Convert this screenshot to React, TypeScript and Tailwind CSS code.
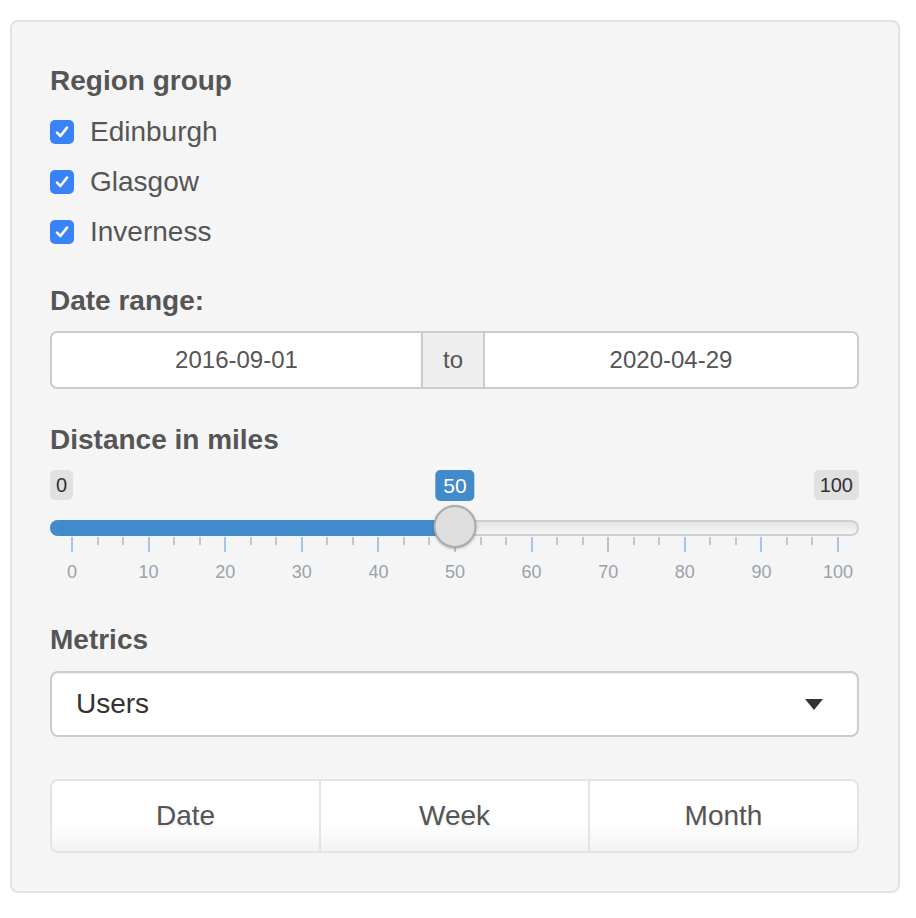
import React from 'react';

const regions = ['Edinburgh', 'Glasgow', 'Inverness'];
const TICK_LEFT = 22;
const TICK_SPAN = 766;
const ticks = Array.from({ length: 31 }, (_, i) => i);

function CheckRow({ label }: { label: string }) {
  return (
    <div className="flex h-[50px] items-center">
      <span className="flex h-[24px] w-[24px] items-center justify-center rounded-[5px] bg-[#3a82f7]">
        <svg width="16" height="16" viewBox="0 0 16 16" fill="none">
          <path d="M3 8.6 L6.4 12 L13 3.6" stroke="white" strokeWidth="2.6" strokeLinecap="round" strokeLinejoin="round" />
        </svg>
      </span>
      <span className="ml-[16px] text-[28px] leading-[40px] text-[#555]">{label}</span>
    </div>
  );
}

function DistanceSlider() {
  const value = 50;
  const handleX = TICK_LEFT + (TICK_SPAN * value) / 100;
  return (
    <div className="relative mt-[10px] h-[118px]">
      <span className="absolute left-0 top-0 h-[30px] rounded-[5px] bg-[#e1e1e1] px-[6px] text-[20px] leading-[30px] text-[#333]">0</span>
      <span className="absolute right-0 top-0 h-[30px] rounded-[5px] bg-[#e1e1e1] px-[6px] text-[20px] leading-[30px] text-[#333]">100</span>
      <span
        className="absolute top-0 h-[31px] -translate-x-1/2 rounded-[5px] bg-[#428bca] px-[8px] text-[21px] leading-[31px] text-white"
        style={{ left: handleX }}
      >
        50
      </span>
      <div className="absolute left-0 right-0 top-[50px] h-[16px] rounded-full border-2 border-[#d0d0d0] bg-gradient-to-b from-[#e4e4e4] to-[#f7f7f7]" />
      <div className="absolute left-0 top-[50px] h-[16px] rounded-l-full bg-[#428bca]" style={{ width: handleX }} />
      {ticks.map((i) => {
        const major = i % 3 === 0;
        return (
          <span
            key={i}
            className={major ? 'absolute top-[67px] h-[15px] w-[2px] bg-[#a8c6e3]' : 'absolute top-[67px] h-[8px] w-[2px] bg-[#c6c6c6]'}
            style={{ left: TICK_LEFT + (TICK_SPAN * i) / 30 - 1 }}
          />
        );
      })}
      {ticks.filter((i) => i % 3 === 0).map((i) => (
        <span
          key={i}
          className="absolute top-[92px] -translate-x-1/2 text-[18px] leading-[20px] text-[#9aa2ab]"
          style={{ left: TICK_LEFT + (TICK_SPAN * i) / 30 }}
        >
          {(i / 3) * 10}
        </span>
      ))}
      <div
        className="absolute top-[35px] h-[43px] w-[43px] -translate-x-1/2 rounded-full border-2 border-[#ababab] bg-[#dedede] shadow-[0_1px_3px_rgba(0,0,0,0.25)]"
        style={{ left: handleX }}
      />
    </div>
  );
}

export default function App() {
  return (
    <div className="min-h-[918px] bg-white pl-[10px] pt-[20px] font-['Liberation_Sans',Arial,sans-serif]">
      <div className="w-[890px] rounded-[8px] border-2 border-[#e3e3e3] bg-[#f5f5f5] pb-[38px] pl-[38px] pr-[39px] pt-[39px]">
        <div className="text-[28px] font-bold leading-[40px] text-[#555]">Region group</div>
        <div className="mt-[6px]">
          {regions.map((r) => (
            <CheckRow key={r} label={r} />
          ))}
        </div>

        <div className="mt-[24px] text-[28px] font-bold leading-[40px] text-[#555]">Date range:</div>
        <div className="mt-[10px] flex h-[58px]">
          <div className="flex flex-1 items-center justify-center rounded-l-[7px] border-2 border-[#cccccc] bg-white text-[24px] text-[#555]">2016-09-01</div>
          <div className="flex w-[60px] items-center justify-center border-y-2 border-[#cccccc] bg-[#eeeeee] text-[24px] text-[#555]">to</div>
          <div className="flex w-[376px] items-center justify-center rounded-r-[7px] border-2 border-[#cccccc] bg-white text-[24px] text-[#555]">2020-04-29</div>
        </div>

        <div className="mt-[31px] text-[28px] font-bold leading-[40px] text-[#555]">Distance in miles</div>
        <DistanceSlider />

        <div className="mt-[32px] text-[28px] font-bold leading-[40px] text-[#555]">Metrics</div>
        <div className="mt-[11px] flex h-[66px] items-center justify-between rounded-[8px] border-2 border-[#cccccc] bg-white pl-[24px] pr-[34px] shadow-[inset_0_1px_2px_rgba(0,0,0,0.06)]">
          <span className="text-[28px] text-[#333]">Users</span>
          <svg width="18" height="11" viewBox="0 0 18 11">
            <path d="M0 0 H18 L9 11 Z" fill="#333" />
          </svg>
        </div>

        <div className="mt-[42px] flex h-[74px]">
          {['Date', 'Week', 'Month'].map((b, i) => (
            <div
              key={b}
              className={
                'flex flex-1 items-center justify-center border-2 border-[#e4e4e4] bg-gradient-to-b from-white from-60% to-[#f3f3f3] text-[28px] text-[#555] [text-shadow:0_2px_2px_rgba(0,0,0,0.08)] ' +
                (i === 0 ? 'rounded-l-[8px]' : i === 2 ? 'rounded-r-[8px] -ml-[2px]' : '-ml-[2px]')
              }
            >
              {b}
            </div>
          ))}
        </div>
      </div>
    </div>
  );
}
